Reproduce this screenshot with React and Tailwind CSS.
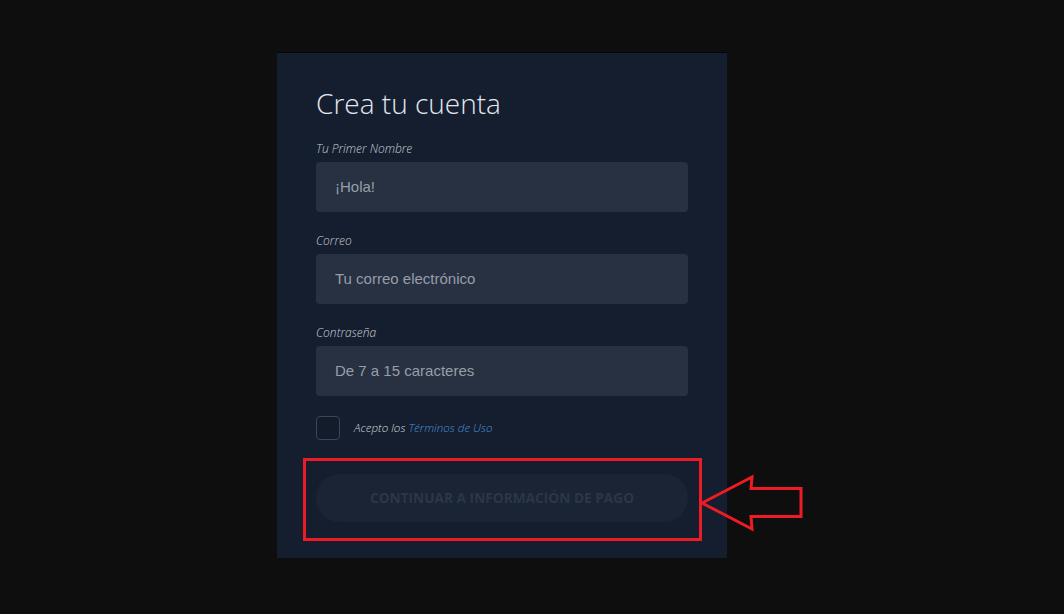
export default function App() {
  const label = "block text-[12px] leading-[16px] italic font-light text-[#c9cdd5]";
  const input =
    "w-full h-[50px] rounded-[4px] bg-[#273142] pl-[19px] flex items-center text-[15px] text-[#979ea9]";
  return (
    <div className="relative min-h-screen w-full bg-[#0e0e0e] pt-[52px] pl-[277px]" style={{ fontFamily: "'Open Sans', sans-serif" }}>
      <div className="w-[450px] border-t border-[#050608] bg-[#151e2f] px-[39px] pt-[32px] pb-[36px]">
        <h1 className="text-[28px] leading-[36px] font-light text-[#e3e7ee]">Crea tu cuenta</h1>

        <div className="mt-[20px]">
          <span className={label}>Tu Primer Nombre</span>
          <div className={"mt-[5px] " + input} style={{ fontFamily: "'Liberation Sans', Arial, sans-serif" }}>¡Hola!</div>
        </div>

        <div className="mt-[21px]">
          <span className={label}>Correo</span>
          <div className={"mt-[5px] " + input} style={{ fontFamily: "'Liberation Sans', Arial, sans-serif" }}>Tu correo electrónico</div>
        </div>

        <div className="mt-[21px]">
          <span className={label}>Contraseña</span>
          <div className={"mt-[5px] " + input} style={{ fontFamily: "'Liberation Sans', Arial, sans-serif" }}>De 7 a 15 caracteres</div>
        </div>

        <div className="mt-[20px] flex items-center gap-[14px]">
          <div className="h-[24px] w-[24px] rounded-[4px] border border-[#3b4558] bg-[#141c2b]"></div>
          <span className="text-[11.6px] italic font-light text-[#d3d7de]">
            Acepto los <span className="text-[#4b8fd8]">Términos de Uso</span>
          </span>
        </div>

        <button className="mt-[34px] flex h-[48px] w-full items-center justify-center rounded-full bg-[#1b2435] text-[13.7px] font-bold uppercase text-[#2b3647]">
          Continuar a información de pago
        </button>
      </div>

      <svg className="pointer-events-none absolute left-0 top-0" width="1064" height="614" viewBox="0 0 1064 614">
        <rect x="304.5" y="459.5" width="396" height="80" fill="none" stroke="#ed1c24" strokeWidth="3" />
        <polygon
          points="702,503 752,477 751,488.5 801,488.5 801,516.5 751,516.5 752,529"
          fill="none"
          stroke="#ed1c24"
          strokeWidth="3"
          strokeLinejoin="miter"
        />
      </svg>
    </div>
  );
}
